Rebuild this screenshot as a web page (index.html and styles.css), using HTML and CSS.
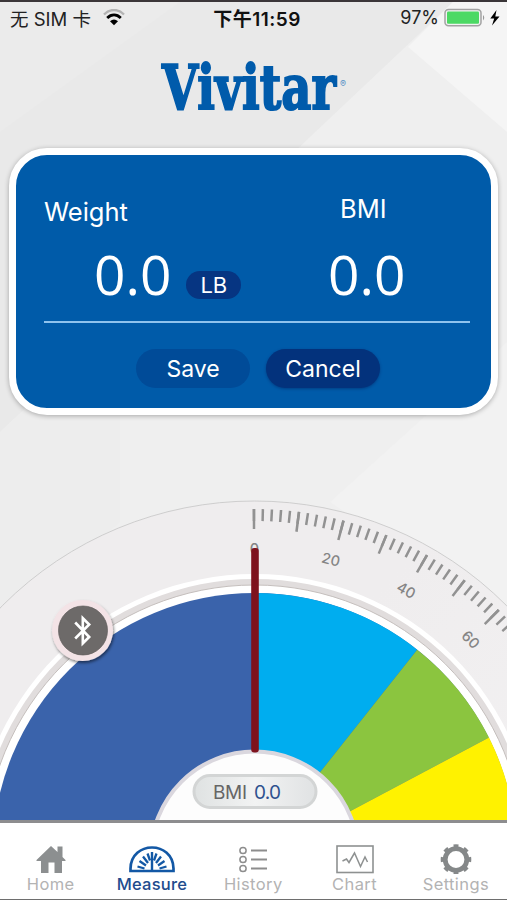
FILE: index.html
```html
<!DOCTYPE html>
<html lang="en">
<head>
    <meta charset="UTF-8">
    <meta name="viewport" content="width=device-width, initial-scale=1.0">
    <title>Vivitar Scale</title>
    <link rel="stylesheet" href="styles.css">
</head>
<body>

    <div class="app">
        <svg class="backdrop" viewBox="0 0 507 900">
            <rect width="507" height="900" fill="#efefef"/>
            <path d="M0 0H453L310 135L150 290L0 430Z" fill="#e9e9e9"/>
            <path d="M0 130L180 0H0Z" fill="#ebebeb"/>
            <path d="M453 0H507V130L408 45Z" fill="#f5f5f5"/>
            <path d="M0 430L120 320V520L0 620Z" fill="#ededed"/>
            <path d="M507 340L330 500L507 620Z" fill="#f2f2f2"/>
        </svg>

        <header class="status">
            <div class="carrier">
                <span>无 SIM 卡</span>
                <svg width="22" height="17" viewBox="0 0 22 17">
                    <path d="M1 5.5C7 -.5 15 -.5 21 5.5" fill="none" stroke="#b3b3b3" stroke-width="2.4"/>
                    <path d="M4.2 9C8.3 5 13.7 5 17.8 9" fill="none" stroke="#000" stroke-width="2.8"/>
                    <path d="M7 12.2Q11 8.8 15 12.2L11 16.2Z"/>
                </svg>
            </div>
            <div class="time">下午11:59</div>
            <div class="power">
                <span>97%</span>
                <svg width="58" height="20" viewBox="0 0 58 20">
                    <rect x="1" y="1.4" width="36" height="16.4" rx="3.5" fill="#f3f3f3" stroke="#a2a2a2" stroke-width="1.5"/>
                    <rect x="3" y="3.5" width="32" height="12.3" rx="1.2" fill="#4cd964"/>
                    <path d="M39 7Q41.5 9.5 39 12.5Z" fill="#999"/>
                    <path d="M52.5 2L46.3 10.6H50.2L48 17.5L55.5 8.4H51.3Z"/>
                </svg>
            </div>
        </header>

        <svg class="logo" width="200" height="90" viewBox="0 -15 200 90">
            <text class="logo-name" x="8" y="51" textLength="174" lengthAdjust="spacingAndGlyphs">Vivitar</text>
            <text class="logo-mark" x="186" y="29">®</text>
        </svg>

        <section class="card">
            <div class="readings">
                <div class="reading weight">
                    <h2>Weight</h2>
                    <div class="value">0.0 <span class="unit">LB</span></div>
                </div>
                <div class="reading bmi">
                    <h2>BMI</h2>
                    <div class="value">0.0</div>
                </div>
            </div>
            <div class="buttons">
                <button class="save">Save</button>
                <button class="cancel">Cancel</button>
            </div>
        </section>

        <svg class="gauge" width="507" height="330" viewBox="0 490 507 330">
            <defs>
                <filter id="drop" x="-30%" y="-30%" width="160%" height="160%">
                    <feDropShadow dx="1" dy="2" stdDeviation="1.8" flood-opacity=".5"/>
                </filter>
                <linearGradient id="pill">
                    <stop offset="0" stop-color="#dfe2e2"/>
                    <stop offset=".5" stop-color="#f2f3f3"/>
                    <stop offset="1" stop-color="#e0e2e3"/>
                </linearGradient>
                <linearGradient id="outer" x2="1" y2="1">
                    <stop offset=".4" stop-color="#efedee"/>
                    <stop offset="1" stop-color="#f6f5f6"/>
                </linearGradient>
            </defs>

            <!-- dial rings -->
            <circle cx="254.5" cy="857" r="356" fill="url(#outer)" stroke="#c5c5c5" stroke-width=".8"/>
            <circle cx="254.5" cy="855" r="281" fill="#fff"/>
            <circle cx="254.5" cy="855" r="276" fill="#e1dddd"/>
            <circle cx="254.5" cy="855" r="270" fill="#fff" stroke="#c5bfbd" stroke-width="1"/>

            <!-- BMI zones -->
            <circle cx="254.5" cy="855" r="262" fill="#3a63ab"/>
            <path d="M254.5 855V593A262 262 0 0 1 417.2 649.7Z" fill="#00adef"/>
            <path d="M254.5 855L417.2 649.7A262 262 0 0 1 489 737.5L254.5 862Z" fill="#8bc53f"/>
            <path d="M254.5 862L489 737.5A262 262 0 0 1 516.5 862Z" fill="#fff200"/>

            <!-- scale: one small tick every 1.5deg, one long tick every 7.5deg -->
            <g fill="none" stroke="#929292" transform="rotate(-.3 254.5 855)">
                <path d="M254.5 515A340 340 0 0 1 594.5 855" pathLength="600" stroke-width="12" stroke-dasharray="2.8 7.2"/>
                <path d="M254.5 519A336 336 0 0 1 590.5 855" pathLength="600" stroke-width="20" stroke-dasharray="2.9 47.1"/>
            </g>
            <g class="scale-text">
                <text x="254.5" y="554" class="zero">0</text>
                <text x="254.5" y="555" transform="rotate(14.5 254.5 855)">20</text>
                <text x="254.5" y="555" transform="rotate(29.8 254.5 855)">40</text>
                <text x="254.5" y="555" transform="rotate(45.1 254.5 855)">60</text>
            </g>

            <!-- hub -->
            <circle cx="254.5" cy="855" r="104" fill="#fdfdfd"/>
            <circle cx="254.5" cy="855" r="103.5" fill="none" stroke="#dad7de" stroke-width="4"/>
            <rect x="194" y="775.5" width="122" height="32" rx="16" fill="url(#pill)" stroke="#d3d5d5" stroke-width="3"/>
            <text x="213" y="799" class="hub-label" textLength="34">BMI</text>
            <text x="254" y="799" class="hub-value" textLength="27">0.0</text>

            <!-- needle -->
            <rect x="251.2" y="548" width="7.6" height="204.5" rx="3" fill="#7e121d"/>

            <!-- bluetooth -->
            <circle cx="82.5" cy="630.5" r="30.5" fill="#f3e3e6" filter="url(#drop)"/>
            <circle cx="83" cy="630.5" r="24.5" fill="#6d6a69" stroke="#5e5b5a" stroke-width=".7"/>
            <path d="M75.2 622.5L89.2 637L82.8 643.3V618.2L89.2 624.5L75.2 638.5" fill="none" stroke="#fff" stroke-width="2.6"/>
        </svg>

        <nav class="tabs">
            <a class="tab">
                <svg width="48" height="32" viewBox="0 0 48 32">
                    <path d="M9.5 18L24 4L30.5 10V4.5H35.5V15L38.5 18V19H35V31H27.5V20.5H21.5V31H14V19H9.5Z" fill="#8c8f90"/>
                </svg>
                <span>Home</span>
            </a>
            <a class="tab active">
                <svg width="48" height="32" viewBox="0 0 48 32" fill="none" stroke="#1358a5">
                    <path d="M2.5 29V26.5C3 -1.5 45 -1.5 45.5 26.5V29Z" stroke-width="2.7"/>
                    <path d="M24 10V28" stroke-width="2.4"/>
                    <path d="M9.5 24.5L16.500 26.5M11.500 19L18 23.5M15 14.500L20 21M19.500 11.500L22 18.500M28.500 11.500L26 18.500M33 14.500L28 21M36.500 19L30 23.500M38.500 24.500L31.500 26.500" stroke-width="2.3"/>
                </svg>
                <span>Measure</span>
            </a>
            <a class="tab">
                <svg width="48" height="32" viewBox="0 0 48 32" fill="none" stroke="#8d8d8d">
                    <g stroke-width="1.5">
                        <circle cx="14" cy="8.5" r="3.1"/>
                        <circle cx="14" cy="17.5" r="3.1"/>
                        <circle cx="14" cy="26.5" r="3.1"/>
                    </g>
                    <path d="M22 8.5H38M22 17.5H38M22 26.5H38" stroke-width="2.2"/>
                </svg>
                <span>History</span>
            </a>
            <a class="tab">
                <svg width="48" height="32" viewBox="0 0 48 32" fill="none" stroke="#8e9191">
                    <rect x="6" y="4" width="36" height="26.5" stroke-width="1.6"/>
                    <path d="M11.5 19L15.5 17L18 20.5L23.5 11L29.5 24.5L34 15L36.5 20" stroke-width="1.5"/>
                </svg>
                <span>Chart</span>
            </a>
            <a class="tab">
                <svg width="48" height="32" viewBox="0 0 48 32" fill="none" stroke="#858889">
                    <circle cx="24" cy="17.5" r="10.8" stroke-width="4.8"/>
                    <circle cx="24" cy="17.5" r="13.7" pathLength="80" stroke-width="3.2" stroke-dasharray="4.6 5.4" stroke-dashoffset="2.3"/>
                </svg>
                <span>Settings</span>
            </a>
        </nav>
    </div>

</body>
</html>
```
FILE: styles.css
```css
* {
    margin: 0;
    padding: 0;
    box-sizing: border-box;
}

body {
    font-family: Inter, "Noto Sans CJK SC", sans-serif;
    background: #efefef;
}

.app {
    position: relative;
    display: flex;
    flex-direction: column;
    width: 507px;
    height: 900px;
    overflow: hidden;
    border-top: 2px solid #3b3639;
    border-bottom: 1px solid #6e6e6e;
}

.backdrop {
    position: absolute;
    inset: 0;
    z-index: -1;
}

.status {
    display: grid;
    grid-template-columns: 1fr auto 1fr;
    align-items: center;
    height: 33px;
    padding: 0 5px 2px 10px;
    font-size: 18px;
    color: #222;
}

.carrier, .power {
    display: flex;
    align-items: center;
}

.carrier {
    gap: 12px;
    font-size: 18.5px;
}
.power { justify-content: flex-end; gap: 5px; }

.time {
    font-size: 19px;
    font-weight: 600;
    letter-spacing: 0.5px;
    padding-left: 2px;
    color: #111;
}

.logo {
    margin: 8px 0 0 154px;
    overflow: visible;
}

.logo-name {
    font-family: "DejaVu Serif", serif;
    font-size: 61px;
    font-weight: 700;
    fill: #005bab;
    stroke: #005bab;
    stroke-width: 2;
}

.logo-mark {
    font-size: 9px;
    fill: #5590c5;
}

.card {
    width: 489px;
    height: 267px;
    margin: 15px 0 0 9px;
    padding: 0 21px 0 28px;
    border: 7px solid #fff;
    border-radius: 38px;
    background: #005ba9;
    box-shadow: 0 1px 5px rgba(0, 0, 0, 0.3);
    color: #fff;
}

.readings {
    display: flex;
    height: 168px;
    border-bottom: 2px solid #8fc3ee;
}

.weight { width: 284px; padding-top: 41px; }
.bmi { padding-top: 38px; }
.bmi h2 { padding-left: 12px; }

h2 {
    font-size: 25.5px;
    line-height: 32px;
    font-weight: 400;
}

.value {
    display: flex;
    align-items: flex-end;
    height: 79px;
    font-family: "Open Sans", sans-serif;
    font-size: 55px;
    line-height: 66px;
    font-weight: 400;
}

.weight .value { padding-left: 50px; gap: 15px; }
.bmi .value { height: 82px; }

.unit {
    width: 55px;
    height: 28px;
    margin-bottom: 8px;
    border-radius: 14px;
    background: #063582;
    font-family: Inter, sans-serif;
    font-size: 22px;
    line-height: 29px;
    text-align: center;
}

.buttons {
    display: flex;
    gap: 16px;
    padding: 26px 0 0 92px;
}

button {
    width: 114px;
    height: 39px;
    border: none;
    border-radius: 20px;
    color: #fff;
    font-family: inherit;
    font-size: 23px;
}

.save { background: #004b98; }
.cancel {
    background: #03327c;
    box-shadow: 0 1px 3px rgba(0, 20, 80, 0.4);
}

.gauge {
    flex: none;
    margin-top: 75px;
}

.scale-text {
    font-size: 14.5px;
    font-weight: 500;
    fill: #858585;
    text-anchor: middle;
}

.hub-label, .hub-value { font-size: 19px; }
.hub-label { fill: #666; }
.hub-value { fill: #2f518f; }

.tabs {
    display: grid;
    grid-template-columns: repeat(5, 101.3px);
    height: 79px;
    border-top: 3px solid #8d8d8f;
    background: #fff;
}

.tab {
    display: flex;
    flex-direction: column;
    align-items: center;
    padding-top: 19px;
    color: #b3b3b3;
    font-size: 16.5px;
    line-height: 20px;
    letter-spacing: 0.4px;
}

.tab.active {
    color: #214b8d;
    font-weight: 500;
    letter-spacing: 0.2px;
}
```
